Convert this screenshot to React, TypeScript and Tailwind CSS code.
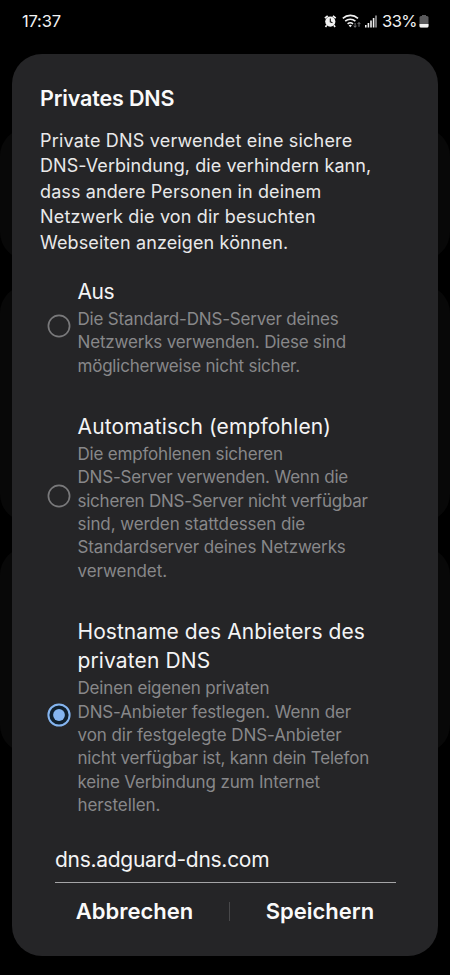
import React from "react";

type Line = { text: string; className: string };

function Lines({ items }: { items: Line[] }) {
  return (
    <>
      {items.map((l) => (
        <span key={l.text} className={`block whitespace-nowrap ${l.className}`}>
          {l.text}
        </span>
      ))}
    </>
  );
}

function Radio({ checked }: { checked?: boolean }) {
  return (
    <svg className="mb-[3.5px] size-6 shrink-0" viewBox="0 0 24 24" fill="none">
      {checked ? (
        <>
          <circle cx="12" cy="12" r="10.6" fill="#10202e" stroke="#85b5f0" strokeWidth="2" />
          <circle cx="12" cy="12" r="5.9" fill="#85b5f0" />
        </>
      ) : (
        <circle cx="12" cy="12" r="10.6" stroke="#79797b" strokeWidth="1.7" />
      )}
    </svg>
  );
}

function Option({ title, body, checked }: { title: Line[]; body: Line[]; checked?: boolean }) {
  return (
    <label className="flex items-center gap-[6.5px]">
      <Radio checked={checked} />
      <span className="block">
        <span className="block text-[21px] leading-[29.5px] text-[#f4f4f5]">
          <Lines items={title} />
        </span>
        <span className="mt-[1.5px] block text-[17px] leading-[23.4px] text-[#88888a]">
          <Lines items={body} />
        </span>
      </span>
    </label>
  );
}

function StatusIcons() {
  return (
    <svg className="h-5 w-[56px]" viewBox="0 0 56 20" fill="none">
      <g>
        <circle cx="6.3" cy="10.6" r="5.1" fill="#f2f2f2" />
        <path d="M0.9 7.2 3.7 4.8M8.9 4.8l2.8 2.4" stroke="#f2f2f2" strokeWidth="1.7" />
        <path d="m2.7 14.2-1.2 1.8M9.9 14.2l1.2 1.8" stroke="#f2f2f2" strokeWidth="1.6" />
        <path d="M6.3 7.4v3.4l2.2 1" stroke="#111" strokeWidth="1.1" />
      </g>
      <g stroke="#f2f2f2" strokeWidth="1.6">
        <path d="M18.8 7.3a11.4 11.4 0 0 1 15.2 0" />
        <path d="M21.2 10.2a7.8 7.8 0 0 1 10.2 0" />
        <path d="M23.6 12.9a4.2 4.2 0 0 1 5.4 0" />
      </g>
      <path d="M24.7 14.5 26.3 16.3l1.6-1.8a2.3 2.3 0 0 0-3.2 0Z" fill="#f2f2f2" />
      <path d="M31.1 12v4.2m-1.5-1.5 1.5 1.6 1.4-1.6M35 15.8v-4.2m-1.5 1.5 1.5-1.6 1.4 1.6" stroke="#77777a" strokeWidth="1" />
      <g fill="#f2f2f2">
        <path d="M41 14.1h1.6v2.4H41zM43.6 12h1.6v4.5h-1.6zM46.2 9.6h1.6v6.9h-1.6zM48.8 7.1h1.6v9.4h-1.6z" />
        <path d="M51.1 4.6h1.8v11.9h-1.8z" fill="#88888a" />
      </g>
    </svg>
  );
}

export default function App() {
  return (
    <div className="grid h-[975px] w-[450px] overflow-hidden bg-black font-['Inter','Liberation_Sans',sans-serif]">
      <div className="col-start-1 row-start-1 flex flex-col gap-[25px] pt-32">
        <div className="h-[132px] rounded-[28px] bg-[#080808]" />
        <div className="h-[237px] rounded-[28px] bg-[#080808]" />
        <div className="h-[206px] rounded-[28px] bg-[#080808]" />
      </div>

      <div className="col-start-1 row-start-1 flex flex-col">
        <header className="flex h-[54px] items-start justify-between pt-[11px] pl-[22px] pr-[21px] text-[#f2f2f2]">
          <span className="text-[16.5px] leading-5 tracking-[-0.2px]">17:37</span>
          <div className="flex items-center">
            <StatusIcons />
            <span className="ml-[2px] text-[16.5px] leading-5 tracking-[-0.55px]">33%</span>
            <svg className="ml-[2px] h-5 w-[10px]" viewBox="0 0 10 20">
              <path d="M3 4h4v1.5H3z" fill="#59595b" />
              <rect x="0.5" y="5" width="9" height="11.5" rx="1.5" fill="#59595b" />
              <path d="M.5 13h9v2a1.5 1.5 0 0 1-1.5 1.5H2A1.5 1.5 0 0 1 .5 15Z" fill="#f2f2f2" />
            </svg>
          </div>
        </header>

        <main className="mx-3 flex h-[902px] w-[426px] flex-col rounded-[30px] bg-[#252527] px-7 pt-[30px]">
          <h1 className="text-[21.5px] leading-7 font-semibold tracking-[-0.15px] text-[#fafafa]">Privates DNS</h1>
          <p className="mt-[16px] text-[18px] leading-[25.4px] text-[#e9e9ea]">
            <Lines
              items={[
                { text: "Private DNS verwendet eine sichere", className: "tracking-[0.19px]" },
                { text: "DNS-Verbindung, die verhindern kann,", className: "tracking-[0.07px]" },
                { text: "dass andere Personen in deinem", className: "tracking-[0.11px]" },
                { text: "Netzwerk die von dir besuchten", className: "tracking-[0.17px]" },
                { text: "Webseiten anzeigen können.", className: "tracking-[0.13px]" },
              ]}
            />
          </p>

          <div className="mt-[22px] flex flex-col gap-[33.5px] pl-[7px]">
            <Option
              title={[{ text: "Aus", className: "tracking-[-0.5px]" }]}
              body={[
                { text: "Die Standard-DNS-Server deines", className: "tracking-[-0.18px]" },
                { text: "Netzwerks verwenden. Diese sind", className: "tracking-[-0.17px]" },
                { text: "möglicherweise nicht sicher.", className: "tracking-[-0.22px]" },
              ]}
            />
            <Option
              title={[{ text: "Automatisch (empfohlen)", className: "tracking-[0.15px]" }]}
              body={[
                { text: "Die empfohlenen sicheren", className: "tracking-[-0.19px]" },
                { text: "DNS-Server verwenden. Wenn die", className: "tracking-[-0.18px]" },
                { text: "sicheren DNS-Server nicht verfügbar", className: "tracking-[-0.24px]" },
                { text: "sind, werden stattdessen die", className: "tracking-[-0.09px]" },
                { text: "Standardserver deines Netzwerks", className: "tracking-[-0.15px]" },
                { text: "verwendet.", className: "tracking-[-0.05px]" },
              ]}
            />
            <Option
              checked
              title={[
                { text: "Hostname des Anbieters des", className: "tracking-[0.05px]" },
                { text: "privaten DNS", className: "tracking-[0.12px]" },
              ]}
              body={[
                { text: "Deinen eigenen privaten", className: "tracking-[-0.17px]" },
                { text: "DNS-Anbieter festlegen. Wenn der", className: "tracking-[-0.13px]" },
                { text: "von dir festgelegte DNS-Anbieter", className: "tracking-[-0.06px]" },
                { text: "nicht verfügbar ist, kann dein Telefon", className: "tracking-[-0.2px]" },
                { text: "keine Verbindung zum Internet", className: "tracking-[-0.15px]" },
                { text: "herstellen.", className: "tracking-[-0.08px]" },
              ]}
            />
          </div>

          <div className="mt-[27px] ml-[15px] h-[38px] w-[341px] border-b border-[#a5a5a7] text-[21px] leading-[30px] tracking-[-0.28px] text-[#f4f4f5]">
            dns.adguard-dns.com
          </div>
          <div className="mt-[12px] flex items-center text-[22px] leading-8 font-semibold text-[#fafafa]">
            <button className="w-[189px] text-center">Abbrechen</button>
            <span className="mt-[2px] h-[19px] w-px bg-[#48484a]" />
            <button className="w-[180px] text-center">Speichern</button>
          </div>
        </main>
      </div>
    </div>
  );
}
